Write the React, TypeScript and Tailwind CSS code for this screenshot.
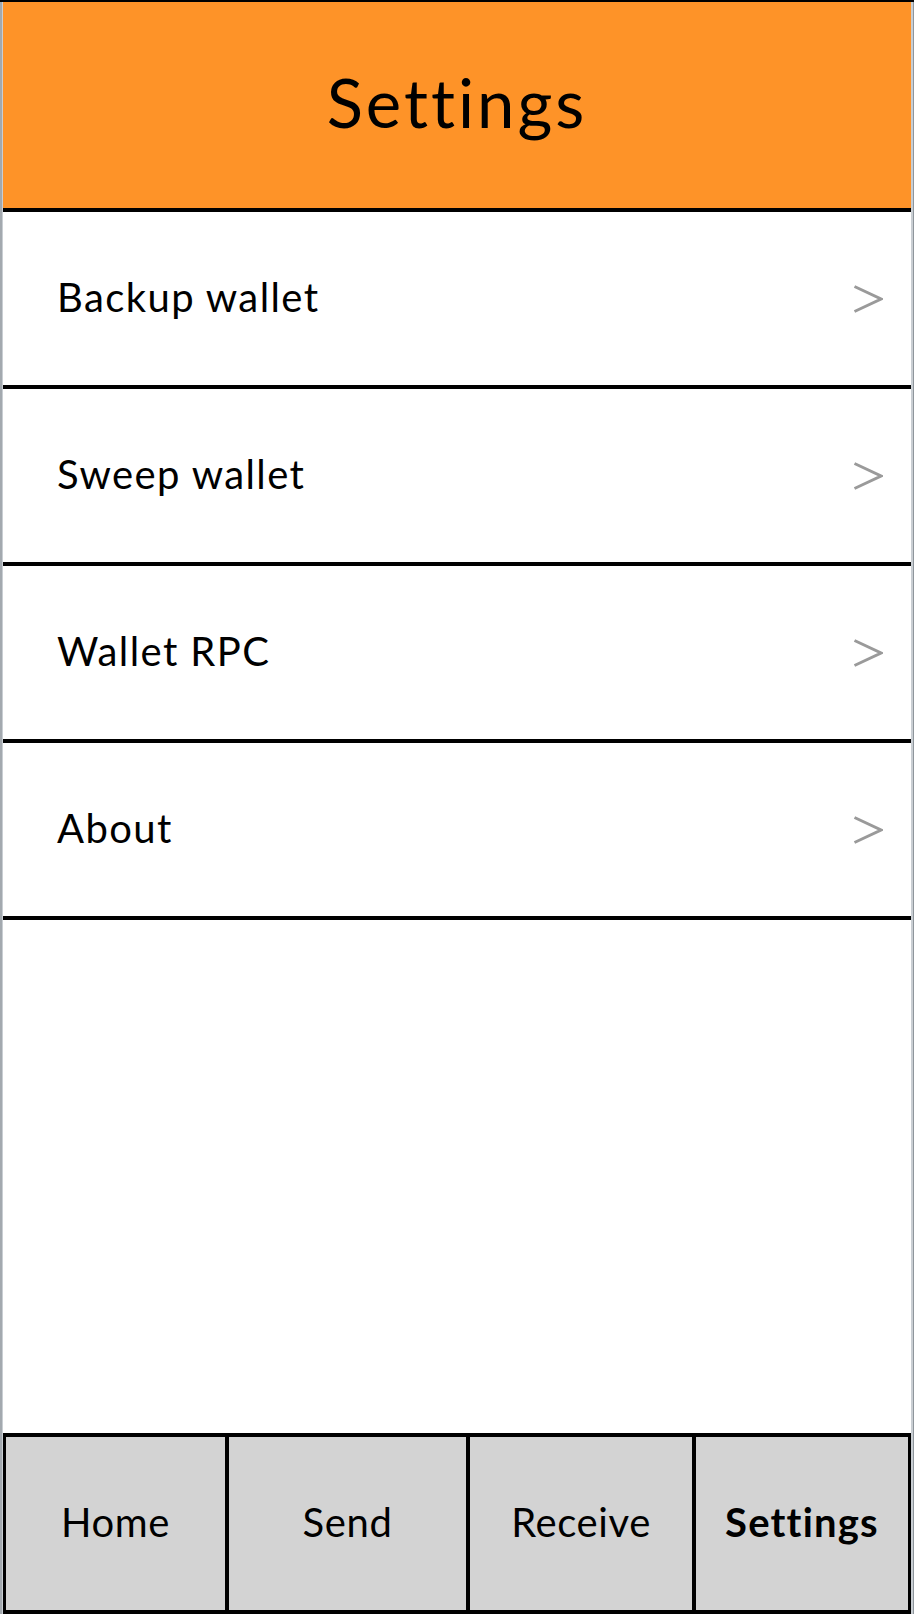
const items = ['Backup wallet', 'Sweep wallet', 'Wallet RPC', 'About'];

const tabs = [
  { label: 'Home', width: 'w-[219px]', active: false },
  { label: 'Send', width: 'w-[241px]', active: false },
  { label: 'Receive', width: 'w-[226px]', active: false },
  { label: 'Settings', width: 'w-[216px]', active: true },
];

function Chevron() {
  return (
    <svg width="30" height="28" viewBox="0 0 30 28" className="shrink-0 mt-[5px]">
      <polyline points="1.5,1.5 28,14 1.5,26.5" fill="none" stroke="#9a9a9a" strokeWidth="3" />
    </svg>
  );
}

export default function App() {
  return (
    <div
      className="w-[914px] h-[1614px] flex border-t-2 border-black bg-white text-black"
      style={{ fontFamily: 'Lato, "Noto Sans", sans-serif' }}
    >
      {/* window edges */}
      <div className="w-[2px] bg-[#a3a9af]" />
      <div className="w-px bg-[#c9ced3]" />

      <div className="flex-1 flex flex-col">
        {/* Header */}
        <header className="h-[210px] shrink-0 flex justify-center pt-[67px] bg-[#fe9328] border-b-4 border-black">
          <h1 className="text-[67px] leading-none font-normal tracking-[3px]">Settings</h1>
        </header>

        {/* Menu */}
        {items.map((item) => (
          <div
            key={item}
            className="h-[177px] shrink-0 flex items-center justify-between pl-[54px] pr-[28px] pb-[4px] border-b-4 border-black"
          >
            <span className="text-[40px] leading-none tracking-[1.4px]">{item}</span>
            <Chevron />
          </div>
        ))}

        <div className="flex-1" />

        {/* Tab bar */}
        <nav className="h-[181px] shrink-0 flex border-4 border-l-[3px] border-r-[3px] border-black bg-[#d3d3d3]">
          {tabs.map((tab, i) => (
            <div
              key={tab.label}
              className={`${tab.width} flex items-center justify-center pb-[4px] ${i > 0 ? 'border-l-4 border-black' : ''}`}
            >
              <span
                className={`text-[40px] leading-none ${tab.active ? 'font-bold tracking-[1.2px]' : 'font-normal tracking-[0.6px]'}`}
              >
                {tab.label}
              </span>
            </div>
          ))}
        </nav>
      </div>

      <div className="w-[2px] bg-[#c9ced3]" />
      <div className="w-px bg-[#8f969c]" />
    </div>
  );
}
